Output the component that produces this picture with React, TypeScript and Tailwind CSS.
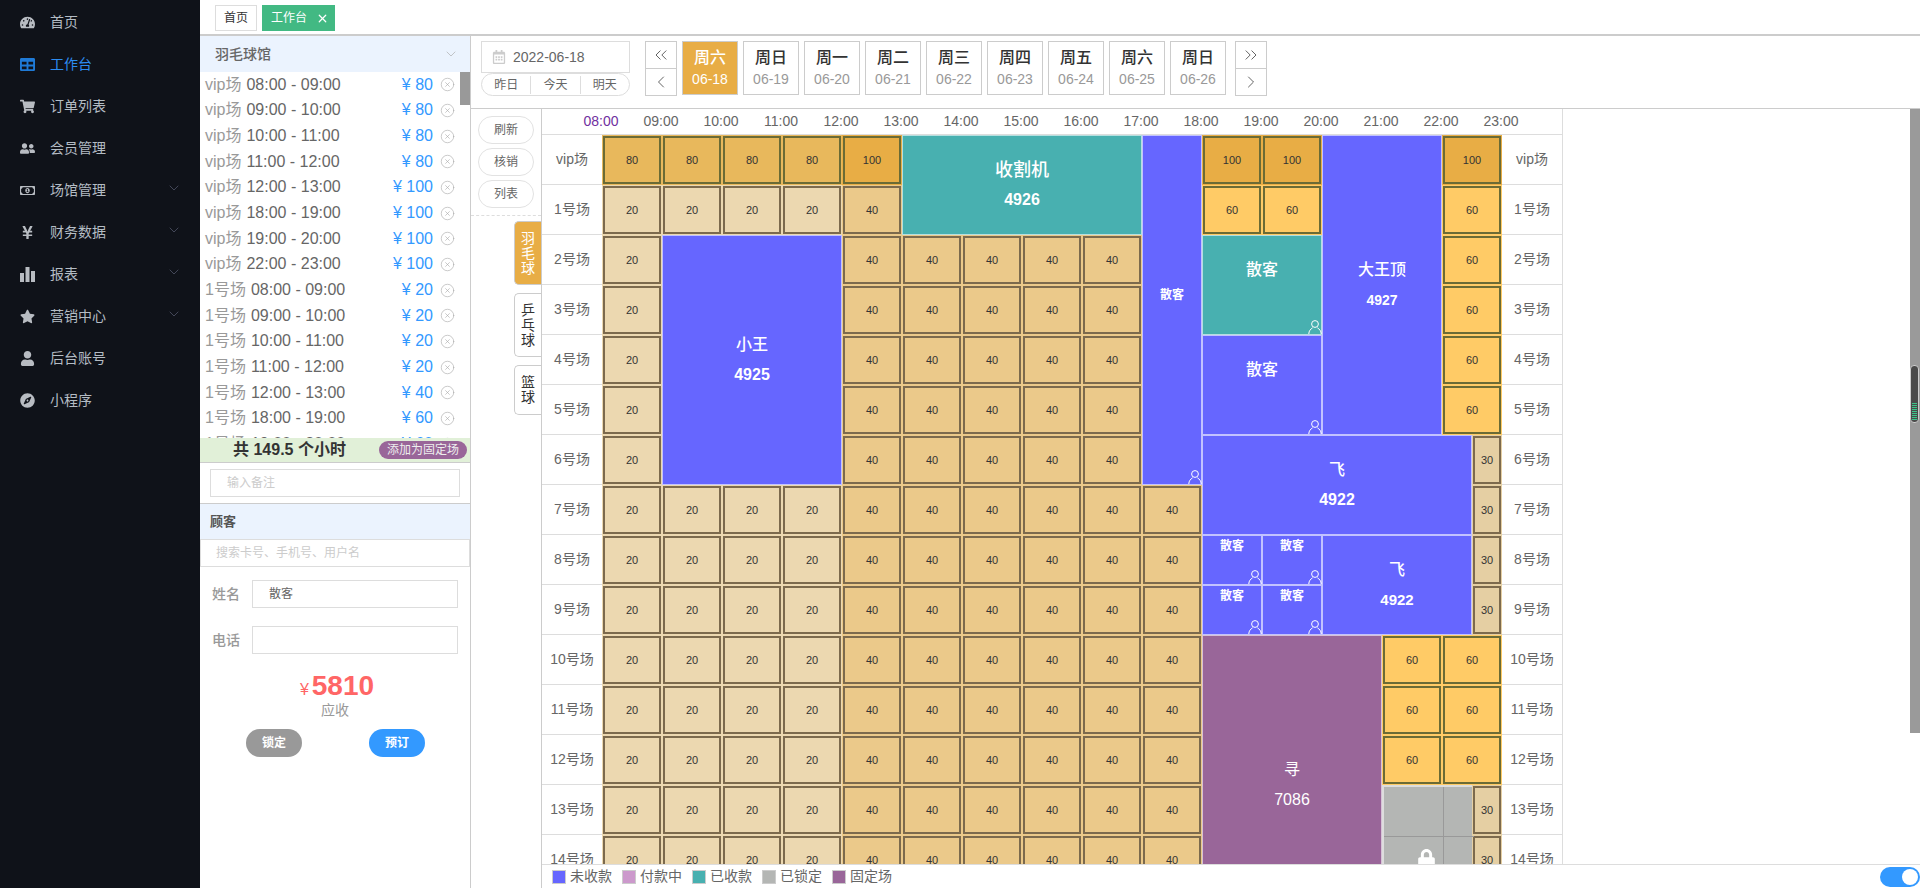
import {
  FaTachometerAlt,
  FaTable,
  FaShoppingCart,
  FaUserFriends,
  FaRegMoneyBillAlt,
  FaYenSign,
  FaStar,
  FaUser,
  FaCompass,
  FaLock,
  FaRegCalendarAlt,
} from "react-icons/fa";
import {
  ChevronDown,
  ChevronLeft,
  ChevronRight,
  ChevronsLeft,
  ChevronsRight,
  CircleX,
  X,
} from "lucide-react";
import type { ReactNode } from "react";

const BarsIcon = () => (
  <svg width="15" height="15" viewBox="0 0 15 15" fill="currentColor">
    <rect x="0" y="6" width="4" height="9" />
    <rect x="5.5" y="0" width="4" height="15" />
    <rect x="11" y="4" width="4" height="11" />
  </svg>
);

const menu: { label: string; icon: ReactNode; arrow?: boolean; active?: boolean }[] = [
  { label: "首页", icon: <FaTachometerAlt size={15} /> },
  { label: "工作台", icon: <FaTable size={15} />, active: true },
  { label: "订单列表", icon: <FaShoppingCart size={15} /> },
  { label: "会员管理", icon: <FaUserFriends size={15} /> },
  { label: "场馆管理", icon: <FaRegMoneyBillAlt size={15} />, arrow: true },
  { label: "财务数据", icon: <FaYenSign size={15} />, arrow: true },
  { label: "报表", icon: <BarsIcon />, arrow: true },
  { label: "营销中心", icon: <FaStar size={15} />, arrow: true },
  { label: "后台账号", icon: <FaUser size={15} /> },
  { label: "小程序", icon: <FaCompass size={15} /> },
];

const orders: [string, string, number][] = [
  ["vip场", "08:00 - 09:00", 80],
  ["vip场", "09:00 - 10:00", 80],
  ["vip场", "10:00 - 11:00", 80],
  ["vip场", "11:00 - 12:00", 80],
  ["vip场", "12:00 - 13:00", 100],
  ["vip场", "18:00 - 19:00", 100],
  ["vip场", "19:00 - 20:00", 100],
  ["vip场", "22:00 - 23:00", 100],
  ["1号场", "08:00 - 09:00", 20],
  ["1号场", "09:00 - 10:00", 20],
  ["1号场", "10:00 - 11:00", 20],
  ["1号场", "11:00 - 12:00", 20],
  ["1号场", "12:00 - 13:00", 40],
  ["1号场", "18:00 - 19:00", 60],
  ["1号场", "19:00 - 20:00", 60],
];

const days = [
  ["周六", "06-18"],
  ["周日", "06-19"],
  ["周一", "06-20"],
  ["周二", "06-21"],
  ["周三", "06-22"],
  ["周四", "06-23"],
  ["周五", "06-24"],
  ["周六", "06-25"],
  ["周日", "06-26"],
];

const hours = Array.from({ length: 16 }, (_, i) => `${String(i + 8).padStart(2, "0")}:00`);
const courts = ["vip场", ...Array.from({ length: 14 }, (_, i) => `${i + 1}号场`)];

const priceStyle: Record<number, string> = {
  20: "bg-[#ecd8b0] border-[#7c6a4d]",
  30: "bg-[#e5cfa3] border-[#7c6a4d]",
  40: "bg-[#ebc98a] border-[#7c6a4d]",
  60: "bg-[#ffcb66] border-[#6b6b35]",
  80: "bg-[#e8b85c] border-[#6b6b35]",
  100: "bg-[#e8ad45] border-[#6b6b35]",
};

// slot = half hour index from 08:00
type Cell = { row: number; slot: number; span: number; price: number };

const buildCells = () => {
  const list: Cell[] = [];
  const add = (row: number, hour: number, price: number) =>
    list.push({ row, slot: hour * 2, span: 2, price });
  const half = (row: number) => list.push({ row, slot: 29, span: 1, price: 30 });

  [0, 1, 2, 3].forEach((h) => add(0, h, 80));
  [4, 10, 11, 14].forEach((h) => add(0, h, 100));
  [0, 1, 2, 3].forEach((h) => add(1, h, 20));
  add(1, 4, 40);
  [10, 11, 14].forEach((h) => add(1, h, 60));
  for (let r = 2; r <= 6; r++) {
    add(r, 0, 20);
    [4, 5, 6, 7, 8].forEach((h) => add(r, h, 40));
    if (r < 6) add(r, 14, 60);
    else half(r);
  }
  for (let r = 7; r <= 14; r++) {
    [0, 1, 2, 3].forEach((h) => add(r, h, 20));
    [4, 5, 6, 7, 8, 9].forEach((h) => add(r, h, 40));
    if (r >= 10 && r <= 12) [13, 14].forEach((h) => add(r, h, 60));
    else half(r);
  }
  return list;
};

type Block = {
  row: number;
  rows: number;
  slot: number;
  span: number;
  color: string;
  name: string;
  no?: string;
  nameClass?: string;
  noClass?: string;
  person?: boolean;
  top?: boolean;
};

const blocks: Block[] = [
  { row: 0, rows: 2, slot: 10, span: 8, color: "bg-[#48b0b0]", name: "收割机", no: "4926", nameClass: "text-[18px] font-medium", noClass: "text-[16px] font-bold" },
  { row: 2, rows: 5, slot: 2, span: 6, color: "bg-[#6666ff]", name: "小王", no: "4925", nameClass: "text-[16px] font-medium", noClass: "text-[16px] font-bold" },
  { row: 0, rows: 7, slot: 18, span: 2, color: "bg-[#6666ff]", name: "散客", nameClass: "text-[12px] font-bold", person: true },
  { row: 2, rows: 2, slot: 20, span: 4, color: "bg-[#48b0b0]", name: "散客", nameClass: "text-[16px] font-medium", person: true },
  { row: 4, rows: 2, slot: 20, span: 4, color: "bg-[#6666ff]", name: "散客", nameClass: "text-[16px] font-medium", person: true },
  { row: 0, rows: 6, slot: 24, span: 4, color: "bg-[#6666ff]", name: "大王顶", no: "4927", nameClass: "text-[16px] font-medium", noClass: "text-[14px] font-bold" },
  { row: 6, rows: 2, slot: 20, span: 9, color: "bg-[#6666ff]", name: "飞", no: "4922", nameClass: "text-[16px] font-medium", noClass: "text-[16px] font-bold" },
  { row: 8, rows: 2, slot: 24, span: 5, color: "bg-[#6666ff]", name: "飞", no: "4922", nameClass: "text-[16px] font-medium", noClass: "text-[15px] font-bold" },
  { row: 8, rows: 1, slot: 20, span: 2, color: "bg-[#6666ff]", name: "散客", top: true, person: true },
  { row: 8, rows: 1, slot: 22, span: 2, color: "bg-[#6666ff]", name: "散客", top: true, person: true },
  { row: 9, rows: 1, slot: 20, span: 2, color: "bg-[#6666ff]", name: "散客", top: true, person: true },
  { row: 9, rows: 1, slot: 22, span: 2, color: "bg-[#6666ff]", name: "散客", top: true, person: true },
  { row: 10, rows: 6, slot: 20, span: 6, color: "bg-[#996699]", name: "寻", no: "7086" },
];

const legend = [
  ["未收款", "bg-[#6666ff]"],
  ["付款中", "bg-[#cc99cc]"],
  ["已收款", "bg-[#48b0b0]"],
  ["已锁定", "bg-[#b4b6b4]"],
  ["固定场", "bg-[#996699]"],
];

const PersonIcon = () => (
  <svg
    className="absolute right-[-1px] bottom-0"
    width="14"
    height="15"
    viewBox="0 0 14 15"
    fill="none"
    stroke="white"
    strokeWidth="1"
  >
    <circle cx="7" cy="5" r="3.4" />
    <path d="M0.8 15c0-3 1.8-5 3.8-6.2M13.2 15c0-3-1.8-5-3.8-6.2" />
  </svg>
);

const Sidebar = () => (
  <aside className="w-[200px] shrink-0 bg-[#0f1219] pt-px">
    {menu.map((m) => (
      <div
        key={m.label}
        className={`flex h-[42px] items-center pl-5 pr-[18px] text-[14px] ${m.active ? "text-[#2d8cf0]" : "text-[#b4bcc4]"}`}
      >
        <span className={`flex w-[30px] ${m.active ? "text-[#1f7ad6]" : "text-[#b8bcc2]"}`}>{m.icon}</span>
        <span className="flex-1">{m.label}</span>
        {m.arrow && <ChevronDown size={16} strokeWidth={1} className="mb-1 text-[#5d6278]" />}
      </div>
    ))}
  </aside>
);

const BookingPanel = () => (
  <section className="flex w-[271px] shrink-0 flex-col border-r border-[#ccc]">
    <div className="flex h-[36px] shrink-0 items-center justify-between bg-[#ebf3fe] pl-[15px] pr-[11px] text-[14px] font-medium text-[#666]">
      羽毛球馆
      <ChevronDown size={16} strokeWidth={1} className="text-[#aaa]" />
    </div>
    <div className="relative h-[366px] shrink-0 overflow-hidden">
      {orders.map(([court, time, price]) => (
        <div key={court + time} className="flex h-[25.67px] items-center pl-[5px] pr-[15px] text-[16px] leading-none">
          <span className="text-[#999]">{court}</span>
          <span className="ml-[5px] text-[#666]">{time}</span>
          <span className="ml-auto text-[#3399ff]">¥ {price}</span>
          <CircleX size={15} strokeWidth={1} className="ml-[7px] text-[#aaa]" />
        </div>
      ))}
      <div className="absolute right-0 top-0 h-[33px] w-[10px] bg-[#999]" />
    </div>
    <div className="flex h-[25px] shrink-0 items-center border-b border-[#ccc] bg-[#e1f0d8] pb-px pl-[33px] pr-[3px]">
      <span className="text-[16px] font-bold text-[#333]">共 149.5 个小时</span>
      <span className="ml-auto flex h-[18px] w-[88px] items-center justify-center rounded-full bg-[#996699] text-[12px] text-[#eee]">
        添加为固定场
      </span>
    </div>
    <div className="h-[41px] shrink-0 border-b border-[#ccc] pl-[10px] pr-[10px] pt-[6px]">
      <div className="flex h-[28px] items-center border border-[#ddd] pl-[16px] text-[12px] text-[#ccc]">输入备注</div>
    </div>
    <div className="flex h-[35px] shrink-0 items-center bg-[#ebf3fe] pl-[10px] text-[13px] font-bold text-[#555]">顾客</div>
    <div className="flex h-[28px] shrink-0 items-center border border-[#ddd] pl-[15px] text-[12px] text-[#ccc]">
      搜索卡号、手机号、用户名
    </div>
    <div className="flex flex-col gap-[18px] pl-3 pr-3 pt-[13px]">
      <label className="flex items-center text-[14px] font-medium text-[#999]">
        <span className="w-10">姓名</span>
        <span className="flex h-[28px] w-[206px] items-center border border-[#ddd] pl-4 text-[12px] font-normal text-[#666]">散客</span>
      </label>
      <label className="flex items-center text-[14px] font-medium text-[#999]">
        <span className="w-10">电话</span>
        <span className="h-[28px] w-[206px] border border-[#ddd]" />
      </label>
    </div>
    <div className="mt-[20px] flex items-baseline justify-center pl-[4px] leading-[24px] text-[#ff6666]">
      <span className="mr-[3px] text-[16px]">¥</span>
      <span className="text-[28px] font-bold">5810</span>
    </div>
    <p className="text-center text-[14px] leading-[16px] text-[#999]">应收</p>
    <div className="mt-[11px] flex justify-between pl-[46px] pr-[45px]">
      <button className="h-[28px] w-[56px] rounded-full bg-[#999] text-[12px] font-bold text-white">锁定</button>
      <button className="h-[28px] w-[56px] rounded-full bg-[#3399ff] text-[12px] font-bold text-white">预订</button>
    </div>
  </section>
);

const DateBar = () => (
  <div className="flex h-[73px] shrink-0 border-b border-[#ccc] pl-[10px] pt-[5px]">
    <div className="w-[149px]">
      <div className="flex h-[32px] items-center border border-[#ddd] pl-[10px] text-[14px] text-[#666]">
        <FaRegCalendarAlt size={14} className="mr-[7px] text-[#ccc]" />
        2022-06-18
      </div>
      <div className="flex h-[23px] items-center rounded-full border border-[#ddd] text-[12px] text-[#666]">
        <span className="flex-1 border-r border-[#ddd] text-center">昨日</span>
        <span className="flex-1 border-r border-[#ddd] text-center">今天</span>
        <span className="flex-1 text-center">明天</span>
      </div>
    </div>
    <div className="ml-[15px] flex h-[55px] w-[32px] flex-col items-center border border-[#ccc] text-[#444]">
      <span className="flex h-[27px] items-center border-b border-[#ccc] w-full justify-center"><ChevronsLeft size={20} strokeWidth={1} /></span>
      <span className="flex flex-1 items-center"><ChevronLeft size={20} strokeWidth={1} /></span>
    </div>
    <div className="ml-[5px] flex gap-[5px]">
      {days.map(([week, date], i) => (
        <div
          key={date}
          className={`flex h-[54px] w-[56px] flex-col items-center justify-center border border-[#ccc] ${i === 0 ? "bg-[#e8ad45] text-white" : "text-[#333]"}`}
        >
          <span className="text-[16px] font-medium leading-[22px]">{week}</span>
          <span className={`text-[14px] leading-[20px] ${i === 0 ? "text-white" : "text-[#999]"}`}>{date}</span>
        </div>
      ))}
    </div>
    <div className="ml-[9px] flex h-[55px] w-[32px] flex-col items-center border border-[#ccc] text-[#444]">
      <span className="flex h-[27px] items-center border-b border-[#ccc] w-full justify-center"><ChevronsRight size={20} strokeWidth={1} /></span>
      <span className="flex flex-1 items-center"><ChevronRight size={20} strokeWidth={1} /></span>
    </div>
  </div>
);

const ToolColumn = () => (
  <div className="flex w-[71px] shrink-0 flex-col border-r border-[#ccc]">
    <div className="flex flex-col items-center gap-[4px] border-b border-dashed border-[#ddd] pb-[7px] pt-[7px]">
      {["刷新", "核销", "列表"].map((t) => (
        <span key={t} className="flex h-[28px] w-[56px] items-center justify-center rounded-full border border-[#e2e2e2] text-[12px] text-[#666]">
          {t}
        </span>
      ))}
    </div>
    <div className="mt-[5px] flex flex-col items-end gap-2 text-[14px] leading-[15px]">
      <span className="flex h-[64px] w-[27px] items-center justify-center rounded-l-[5px] border border-r-0 border-[#ccc] bg-[#e8ad45] text-center text-white">羽<br />毛<br />球</span>
      <span className="flex h-[64px] w-[27px] items-center justify-center rounded-l-[5px] border border-r-0 border-[#ccc] text-center text-[#333]">乒<br />乓<br />球</span>
      <span className="flex h-[50px] w-[27px] items-center justify-center rounded-l-[5px] border border-r-0 border-[#ccc] text-center text-[#333]">篮<br />球</span>
    </div>
  </div>
);

const CourtLabel = ({ name, row, col }: { name: string; row: number; col: number }) => (
  <div
    className="flex items-center justify-center border-b border-[#ddd] text-[14px] text-[#666]"
    style={{ gridRow: row + 1, gridColumn: col }}
  >
    {name}
  </div>
);

const Schedule = () => (
  <div className="flex min-h-0 flex-1 flex-col overflow-hidden">
    <div className="h-[26px] shrink-0 border-b border-r border-[#ddd]">
      <div className="flex h-full items-center pl-[29px] text-[14px] text-[#666]">
        {hours.map((h, i) => (
          <span key={h} className={`w-[60px] text-center ${i === 0 ? "text-[#7030a0]" : ""}`}>{h}</span>
        ))}
      </div>
    </div>
    <div className="grid grid-cols-[60px_repeat(30,30px)_60px] auto-rows-[50px] border-r border-[#ddd]">
      {courts.map((c, r) => (
        <CourtLabel key={c} name={c} row={r} col={1} />
      ))}
      {courts.map((c, r) => (
        <CourtLabel key={c + "r"} name={c} row={r} col={32} />
      ))}
      {buildCells().map((c) => (
        <div
          key={`${c.row}-${c.slot}`}
          className={`p-px ${priceStyle[c.price]}`}
          style={{ gridRow: c.row + 1, gridColumn: `${c.slot + 2} / span ${c.span}` }}
        >
          <div className={`flex h-full items-center justify-center border-2 text-[11px] text-[#333] ${priceStyle[c.price]}`}>
            {c.price}
          </div>
        </div>
      ))}
      {blocks.map((b) => (
        <div
          key={`${b.row}-${b.slot}`}
          className={`relative flex flex-col items-center border border-white/60 text-white ${b.top ? "justify-start" : "justify-center"} ${b.color}`}
          style={{ gridRow: `${b.row + 1} / span ${b.rows}`, gridColumn: `${b.slot + 2} / span ${b.span}` }}
        >
          {b.top ? (
            <span className="text-[12px] font-bold leading-[20px]">{b.name}</span>
          ) : (
            <>
              <span className={`leading-[30px] ${b.nameClass ?? "text-[16px]"}`}>{b.name}</span>
              <span className={`h-[30px] leading-[30px] ${b.noClass ?? "text-[16px]"}`}>{b.no}</span>
            </>
          )}
          {b.person && <PersonIcon />}
        </div>
      ))}
      <div
        className="relative grid grid-cols-[60px_30px] auto-rows-[50px] border-l-2 border-t-2 border-[#ddd] bg-[#b4b6b4]"
        style={{ gridRow: "14 / span 3", gridColumn: "28 / span 3" }}
      >
        {[0, 1, 2, 3, 4, 5].map((i) => (
          <div key={i} className={`border-b border-[#999] ${i % 2 === 0 ? "border-r" : ""}`} />
        ))}
        <FaLock size={19} className="absolute left-[33px] top-[62px] text-white" />
      </div>
    </div>
  </div>
);

export default function App() {
  return (
    <div className="flex h-screen overflow-hidden bg-white font-['Liberation_Sans','Noto_Sans_CJK_SC',sans-serif]">
      <Sidebar />
      <main className="flex min-w-0 flex-1 flex-col">
        <nav className="flex h-[36px] shrink-0 gap-[5px] border-b-2 border-[#ccc] pl-[15px] pt-[5px] text-[12px]">
          <span className="flex h-[26px] w-[42px] items-center justify-center border border-[#ddd] text-[#333]">首页</span>
          <span className="flex h-[26px] w-[73px] items-center bg-[#42b983] pl-[9px] text-white">
            工作台
            <X size={13} strokeWidth={2.2} className="ml-[9px]" />
          </span>
        </nav>
        <div className="flex min-h-0 flex-1">
          <BookingPanel />
          <div className="flex min-w-0 flex-1 flex-col">
            <DateBar />
            <div className="flex min-h-0 flex-1">
              <ToolColumn />
              <div className="flex min-w-0 flex-1 flex-col">
                <div className="flex min-h-0 flex-1">
                  <div className="flex w-[1021px] shrink-0 flex-col overflow-hidden">
                    <Schedule />
                  </div>
                  <div className="flex-1" />
                  <div className="relative h-[624px] w-[10px] shrink-0 bg-[#9a9a9a]">
                    <div className="absolute left-0 top-[256px] flex h-[58px] w-[9px] flex-col justify-end gap-px rounded border border-[#ccc] bg-[#4a4a4a] px-px pb-[2px]">
                      {[0, 1, 2, 3, 4, 5, 6, 7, 8].map((i) => (
                        <span key={i} className="h-px bg-[#3cc68a]" />
                      ))}
                    </div>
                  </div>
                </div>
                <footer className="flex h-[24px] shrink-0 items-center border-t border-[#ddd] pl-[10px] text-[14px] text-[#666]">
                  {legend.map(([label, color]) => (
                    <span key={label} className="flex w-[70px] items-center gap-1">
                      <span className={`h-[14px] w-[14px] border border-[#ccc] ${color}`} />
                      {label}
                    </span>
                  ))}
                  <span className="ml-auto flex h-[20px] w-[40px] items-center justify-end rounded-full bg-[#3399ff] pr-[2px]">
                    <span className="h-[16px] w-[16px] rounded-full bg-white" />
                  </span>
                </footer>
              </div>
            </div>
          </div>
        </div>
      </main>
    </div>
  );
}
